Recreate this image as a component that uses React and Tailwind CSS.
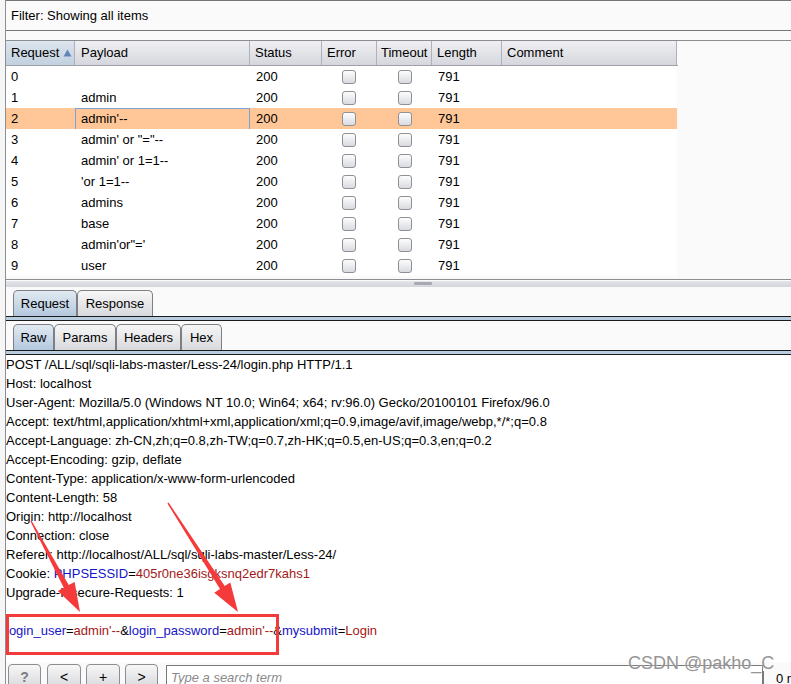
import React from "react";

const rows = [
  ["0", ""],
  ["1", "admin"],
  ["2", "admin'--"],
  ["3", "admin' or \"=\"--"],
  ["4", "admin' or 1=1--"],
  ["5", "'or 1=1--"],
  ["6", "admins"],
  ["7", "base"],
  ["8", "admin'or\"='"],
  ["9", "user"],
];

const GRID = "grid grid-cols-[69px_175px_72px_55px_55px_70px_175px]";

function Cb() {
  return (
    <div className="w-[14px] h-[14px] rounded-[3px] border border-[#8e9096] bg-linear-to-b from-[#fdfdfd] to-[#d9dbe0]" />
  );
}

function HeadCell({ children, sorted, pl }) {
  return (
    <div
      className={
        "h-full flex items-center border-r border-[#aeb1b8] " +
        (pl || "pl-[5px]") +
        " " +
        (sorted
          ? "bg-linear-to-b from-[#dde5ee] to-[#c2d0df]"
          : "bg-linear-to-b from-[#f0f0f3] to-[#d5d7dd]")
      }
    >
      {children}
    </div>
  );
}

function Tab({ label, w, active }) {
  return (
    <div
      className={
        "h-[26px] shrink-0 flex items-center justify-center rounded-t-[5px] border border-b-0 border-[#7d7f84] text-[13px] text-black " +
        w +
        " " +
        (active
          ? "bg-linear-to-b from-[#e2eaf2] to-[#b3c8dd]"
          : "bg-linear-to-b from-[#f7f7f7] to-[#d8d9dd]")
      }
    >
      {label}
    </div>
  );
}

function Strip() {
  return (
    <div className="h-[5px] shrink-0 border-t border-b border-[#1b1b1b] bg-[#b9cde1]" />
  );
}

function arrowPts(x1, y1, x2, y2, headLen, headW, s0, s1) {
  const dx = x2 - x1,
    dy = y2 - y1,
    L = Math.hypot(dx, dy);
  const ux = dx / L,
    uy = dy / L,
    px = -uy,
    py = ux;
  const bx = x2 - ux * headLen,
    by = y2 - uy * headLen;
  const pts = [
    [x1 + px * s0, y1 + py * s0],
    [bx + px * s1, by + py * s1],
    [bx + px * headW, by + py * headW],
    [x2, y2],
    [bx - px * headW, by - py * headW],
    [bx - px * s1, by - py * s1],
    [x1 - px * s0, y1 - py * s0],
  ];
  return pts.map((p) => p[0].toFixed(1) + "," + p[1].toFixed(1)).join(" ");
}

const B = ({ children }) => <span className="text-[#1414c8]">{children}</span>;
const R = ({ children }) => <span className="text-[#a31818]">{children}</span>;

const reqLines = [
  "POST /ALL/sql/sqli-labs-master/Less-24/login.php HTTP/1.1",
  "Host: localhost",
  "User-Agent: Mozilla/5.0 (Windows NT 10.0; Win64; x64; rv:96.0) Gecko/20100101 Firefox/96.0",
  "Accept: text/html,application/xhtml+xml,application/xml;q=0.9,image/avif,image/webp,*/*;q=0.8",
  "Accept-Language: zh-CN,zh;q=0.8,zh-TW;q=0.7,zh-HK;q=0.5,en-US;q=0.3,en;q=0.2",
  "Accept-Encoding: gzip, deflate",
  "Content-Type: application/x-www-form-urlencoded",
  "Content-Length: 58",
  "Origin: http://localhost",
  "Connection: close",
  "Referer: http://localhost/ALL/sql/sqli-labs-master/Less-24/",
];

function Btn({ children, w, muted }) {
  return (
    <div
      className={
        "h-[26px] shrink-0 rounded-[4px] border border-[#8c8e93] bg-linear-to-b from-[#f7f7f7] to-[#d6d7db] flex items-start pt-[4px] leading-[16px] justify-center text-[14px] " +
        w +
        " " +
        (muted ? "text-[#7c7c7c] font-bold" : "text-black")
      }
    >
      {children}
    </div>
  );
}

export default function App() {
  return (
    <div className="w-[791px] h-[684px] bg-[#fafafa] overflow-hidden relative flex font-['Liberation_Sans',Arial,sans-serif] text-black">
      {/* left gutter */}
      <div className="w-[5px] shrink-0 bg-[#f6f6f6]" />
      {/* main column */}
      <div className="flex-1 flex flex-col border-l border-[#8d8f94] min-w-0">
        {/* filter */}
        <div className="h-[31px] shrink-0 border-t border-b border-[#74767a] bg-[#fafafa] flex items-center pl-[5px] text-[13px]">
          Filter: Showing all items
        </div>
        <div className="h-[9px] shrink-0" />
        {/* table */}
        <div className="h-[240px] shrink-0 border-t border-b border-[#8b8d92] flex flex-col">
          <div className={GRID + " h-[25px] border-b border-[#9ea1a8] w-[672px] text-[13px]"}>
            <HeadCell sorted>
              <span>Request</span>
              <svg width="9" height="8" viewBox="0 0 9 8" className="ml-[4px]">
                <path d="M4.5 0.5 L8.5 7.5 L0.5 7.5 Z" fill="#5f86b3" />
              </svg>
            </HeadCell>
            <HeadCell pl="pl-[6px]">Payload</HeadCell>
            <HeadCell>Status</HeadCell>
            <HeadCell>Error</HeadCell>
            <HeadCell pl="pl-[4px]">Timeout</HeadCell>
            <HeadCell>Length</HeadCell>
            <HeadCell>Comment</HeadCell>
          </div>
          <div className="flex flex-col w-[671px]">
            {rows.map(([n, p]) => {
              const sel = n === "2";
              return (
                <div
                  key={n}
                  className={GRID + " h-[21px] text-[13px] " + (sel ? "bg-[#ffc797]" : "bg-white")}
                >
                  <div className="flex items-center pl-[5px]">{n}</div>
                  <div
                    className={
                      "flex items-center " + (sel ? "border border-[#7ca2cf] pl-[5px]" : "pl-[6px]")
                    }
                  >
                    {p}
                  </div>
                  <div className="flex items-center pl-[6px]">200</div>
                  <div className="flex items-center justify-center pr-[1px]">
                    <Cb />
                  </div>
                  <div className="flex items-center justify-center">
                    <Cb />
                  </div>
                  <div className="flex items-center pl-[6px]">791</div>
                  <div />
                </div>
              );
            })}
          </div>
        </div>
        {/* splitter */}
        <div className="h-[10px] shrink-0 pt-[1px]">
          <div className="h-[6px] bg-linear-to-b from-[#e4e5ea] to-[#d3d5db] flex justify-center">
            <div className="w-[18px] h-[3px] mt-[1px] ml-[48px] rounded-[1px] bg-[#a7aab1]" />
          </div>
        </div>
        {/* request/response tabs */}
        <div className="h-[26px] shrink-0 flex items-end pl-[7px]">
          <Tab label="Request" w="w-[64px]" active />
          <Tab label="Response" w="w-[76px]" />
        </div>
        <Strip />
        <div className="h-[3px] shrink-0" />
        <div className="h-[26px] shrink-0 flex items-end pl-[7px]">
          <Tab label="Raw" w="w-[41px]" active />
          <Tab label="Params" w="w-[62px]" />
          <Tab label="Headers" w="w-[65px]" />
          <Tab label="Hex" w="w-[41px]" />
        </div>
        <Strip />
        {/* request text */}
        <div className="h-[307px] shrink-0 bg-white text-[13px] leading-[19px] whitespace-pre overflow-hidden">
          {reqLines.map((l, i) => (
            <div key={i}>{l}</div>
          ))}
          <div>
            Cookie: <B>PHPSESSID</B>=<R>405r0ne36isgksnq2edr7kahs1</R>
          </div>
          <div>Upgrade-Insecure-Requests: 1</div>
          <div>&nbsp;</div>
          <div>
            <B>login_user</B>=<R>admin'--</R>&amp;<B>login_password</B>=<R>admin'--</R>&amp;
            <B>mysubmit</B>=<R>Login</R>
          </div>
        </div>
        {/* bottom bar */}
        <div className="flex-1 min-h-0 flex items-start pl-[2px] pt-[2px] overflow-hidden">
          <Btn w="w-[33px]" muted>?</Btn>
          <div className="w-[6px] shrink-0" />
          <Btn w="w-[34px]">&lt;</Btn>
          <div className="w-[5px] shrink-0" />
          <Btn w="w-[34px]">+</Btn>
          <div className="w-[5px] shrink-0" />
          <Btn w="w-[33px]">&gt;</Btn>
          <div className="w-[8px] shrink-0" />
          <div className="shrink-0 mt-[1px] w-[597px] h-[24px] border border-[#76787c] bg-white pl-[4px] text-[13px] italic text-[#8a8a8a] flex items-start pt-[4px] leading-[16px]">
            Type a search term
          </div>
          <div className="shrink-0 mt-[7px] h-[16px] border-l border-[#76787c] pl-[12px] text-[13px] leading-[16px] whitespace-nowrap">
            0 matches
          </div>
        </div>
      </div>

      {/* annotation: red box */}
      <div className="absolute left-[6px] top-[614px] w-[273px] h-[41px] border-[3px] border-[#f23b3b]" />
      {/* annotation: arrows */}
      <svg className="absolute left-0 top-0 pointer-events-none" width="791" height="684">
        <polygon points={arrowPts(31, 521, 80, 612, 29, 9.5, 0.7, 2.8)} fill="#f43a3a" />
        <polygon points={arrowPts(168, 503, 238, 612, 29, 9.5, 0.7, 2.8)} fill="#f43a3a" />
      </svg>
      {/* watermark */}
      <div className="absolute left-[628px] top-[652px] text-[18px] leading-[22px] text-[#8a8a8a] opacity-90 whitespace-nowrap [text-shadow:0_0_2px_#fff]">
        CSDN @pakho_C
      </div>
    </div>
  );
}
